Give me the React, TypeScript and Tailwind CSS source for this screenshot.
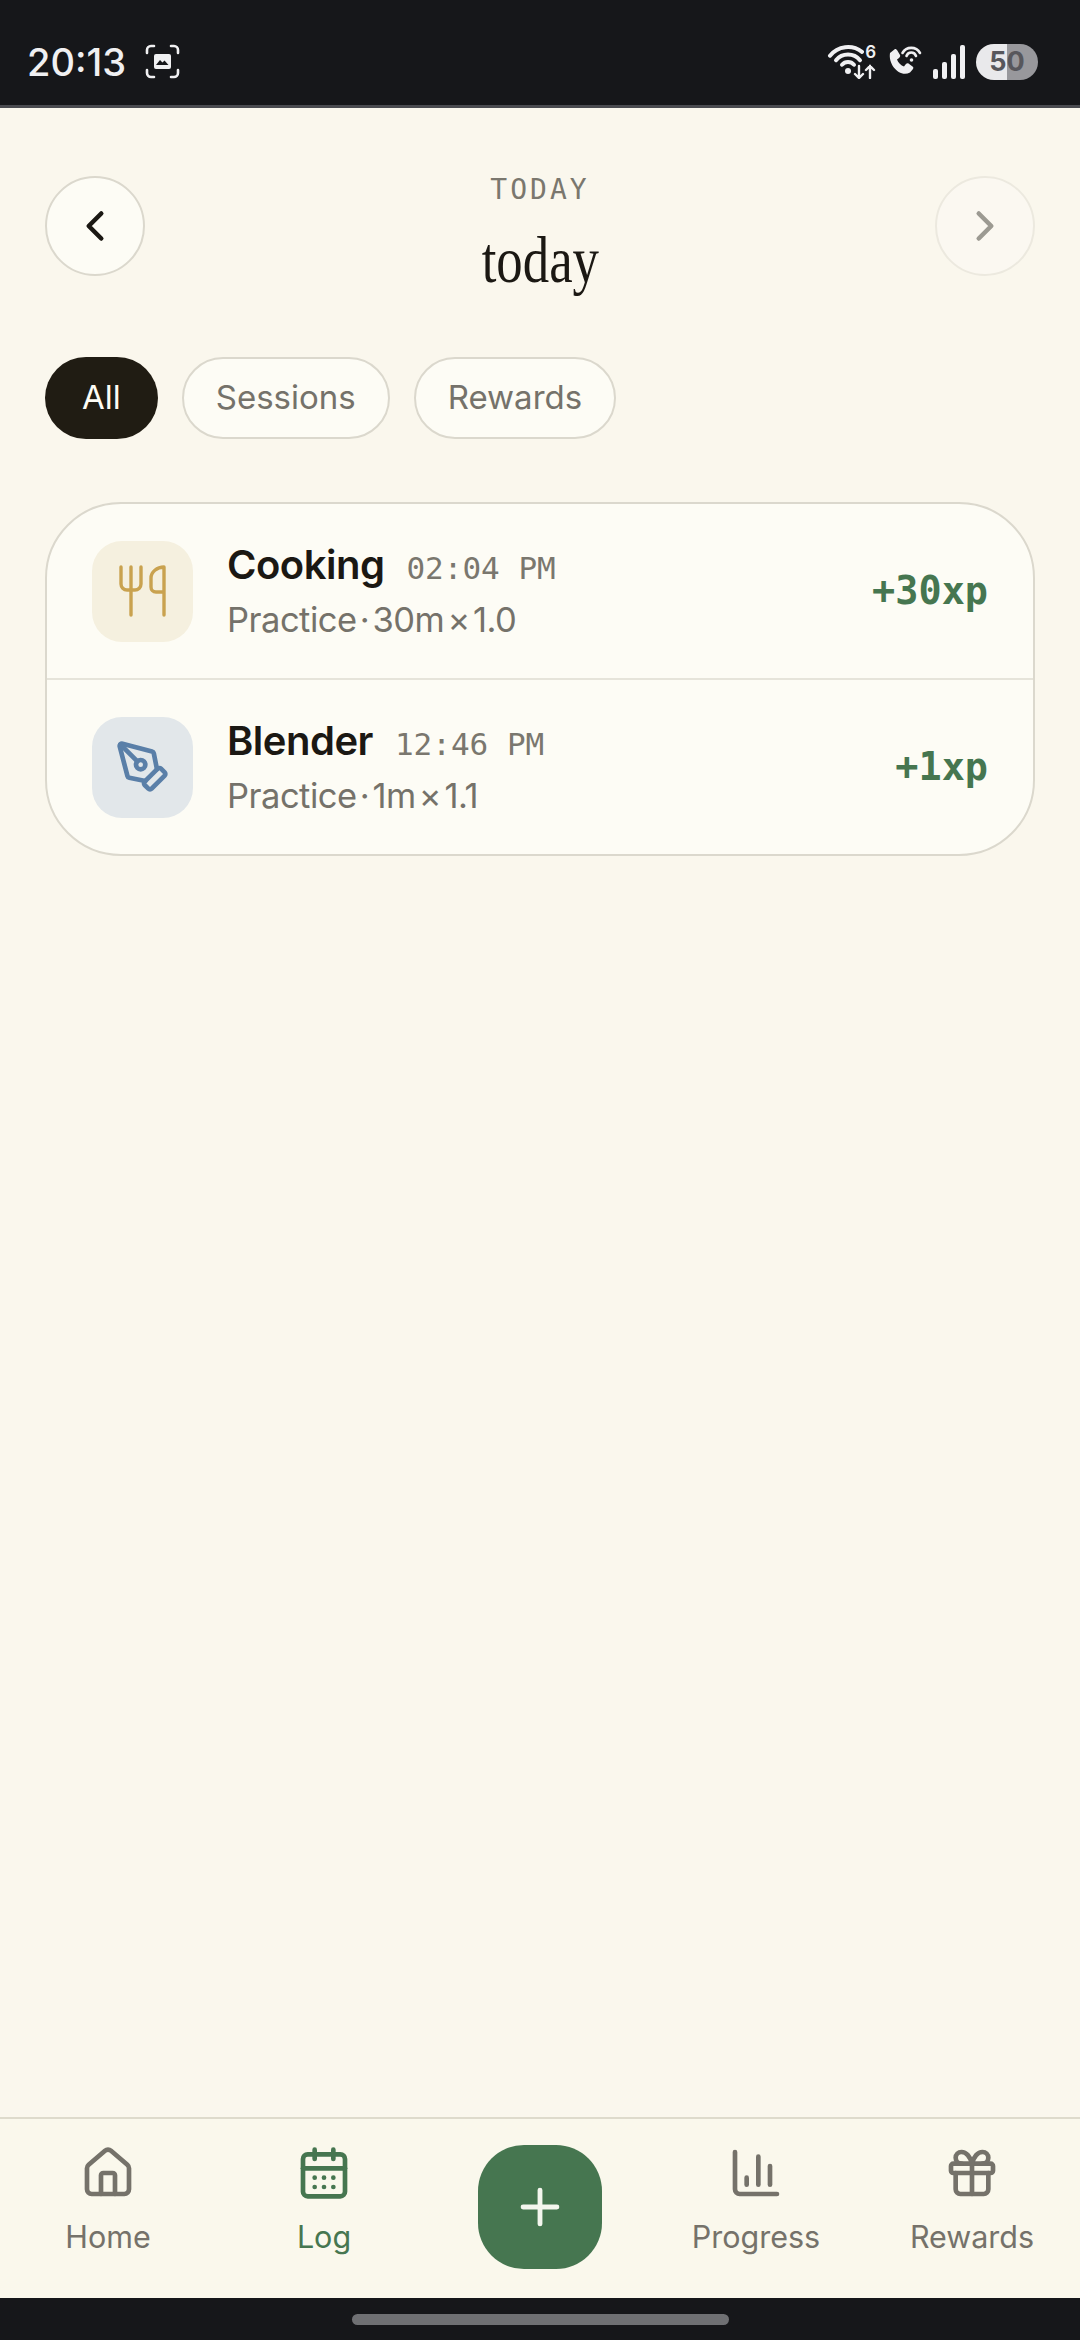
import { CalendarDays, ChartColumn, ChevronLeft, ChevronRight, Gift, House, PenTool, Plus } from "lucide-react";
import type { ReactNode } from "react";

const sans = "font-['Inter','Noto_Sans',sans-serif]";
const mono = "font-['DejaVu_Sans_Mono','Liberation_Mono',monospace]";

function ForkKnife() {
  return (
    <svg width="50" height="54" viewBox="0 0 50 54" fill="none" stroke="#c9a24f" strokeWidth="3.4" strokeLinecap="round" strokeLinejoin="round">
      <path d="M3 3v17a6 6 0 0 0 6 6h8a6 6 0 0 0 6-6V3" />
      <path d="M13 3v48" />
      <path d="M46 51V3c-7 0-13 5-13 11v9c0 3 2 5 5 5h8" />
    </svg>
  );
}

function StatusBar() {
  return (
    <div className="flex h-[108px] shrink-0 items-center justify-between border-b-[3px] border-[#4a4b50] bg-[#16171a] pl-[27px] pr-[42px] pt-[18px] text-[#f0f0f2]">
      <div className="flex items-center gap-[19px]">
        <span className={`${sans} text-[38px] font-medium leading-none`}>20:13</span>
        <svg width="35" height="35" viewBox="0 0 35 35" fill="none" stroke="currentColor" strokeWidth="2.6" strokeLinecap="round">
          <path d="M2 9V6a4 4 0 0 1 4-4h3M26 2h3a4 4 0 0 1 4 4v3M33 26v3a4 4 0 0 1-4 4h-3M9 33H6a4 4 0 0 1-4-4v-3" />
          <rect x="9" y="10" width="17" height="15" rx="2" fill="currentColor" stroke="none" />
          <path d="M11 21l4-5 2.500 2.500 2-2 4 4.500z" fill="#16171a" stroke="none" />
        </svg>
      </div>
      <div className="flex items-center gap-[11px]">
        <div className="relative h-[34px] w-[50px]">
          <svg width="50" height="34" viewBox="0 0 50 34" fill="none" stroke="currentColor" strokeLinecap="round">
            <path d="M3 10.700A23 23 0 0 1 35 6.800" strokeWidth="4" />
            <path d="M9 15.200A15.500 15.500 0 0 1 33 15.200" strokeWidth="4" />
            <path d="M15 19.700A8 8 0 0 1 27 19.700" strokeWidth="4" />
            <circle cx="21" cy="26" r="3" fill="currentColor" stroke="none" />
            <path d="M32 21v12m-4-4 4 4 4-4M43 33V21m-4 4 4-4 4 4" strokeWidth="2.400" />
          </svg>
          <span className={`${sans} absolute right-[1px] top-[-1px] text-[17px] font-semibold leading-[17px]`}>6</span>
        </div>
        <svg width="34" height="34" viewBox="0 0 34 34" fill="currentColor">
          <path d="M2 8l5-4c1 0 1.500.5 2 1l3 5c.5 1 0 2-1 3l-2 1.500c1 3 4 6 7 7l1.500-2c1-1 2-1.500 3-1l4 3c1 .5 1 1.500.5 2.500l-3 3.500C12 33 0 20 2 8z" />
          <path d="M14.500 8A10 10 0 0 1 32 8M18.500 11A5 5 0 0 1 28 11" fill="none" stroke="currentColor" strokeWidth="2.600" strokeLinecap="round" />
          <circle cx="23.500" cy="15" r="1.800" />
        </svg>
        <svg width="32" height="34" viewBox="0 0 32 34" fill="currentColor">
          <rect x="0" y="24" width="5" height="10" rx="2" />
          <rect x="9" y="17" width="5" height="17" rx="2" />
          <rect x="18" y="9" width="5" height="25" rx="2" />
          <rect x="27" y="0" width="5" height="34" rx="2" />
        </svg>
        <div className={`${sans} flex h-[36px] w-[62px] items-center justify-center rounded-full bg-[linear-gradient(90deg,#e9e9eb_50%,#98989c_50%)] text-[27px] font-bold leading-none text-[#57575c]`}>
          50
        </div>
      </div>
    </div>
  );
}

function Chip({ label, active }: { label: string; active?: boolean }) {
  return (
    <div
      className={
        active
          ? `${sans} flex h-[82px] items-center rounded-full bg-[#201c13] px-[37px] text-[33px] text-[#fdfcf5]`
          : `${sans} flex h-[82px] items-center rounded-full border-2 border-[#dbd8cd] bg-[#fdfcf5] px-[32px] text-[33px] text-[#75726a]`
      }
    >
      {label}
    </div>
  );
}

function LogRow({ icon, tint, title, time, detail, xp }: { icon: ReactNode; tint: string; title: string; time: string; detail: string; xp: string }) {
  return (
    <div className="flex h-[174px] items-center pl-[45px] pr-[45px]">
      <div className={`flex size-[101px] shrink-0 items-center justify-center rounded-[30px] ${tint}`}>{icon}</div>
      <div className="ml-[34px] flex-1">
        <div className="flex items-baseline gap-[22px]">
          <span className={`${sans} text-[40px] font-semibold leading-[48px] tracking-[-0.5px] text-[#1b1813]`}>{title}</span>
          <span className={`${mono} text-[31px] text-[#7a776e]`}>{time}</span>
        </div>
        <div className={`${sans} mt-[7px] text-[34.500px] leading-[42px] tracking-[-0.5px] text-[#75726a] [word-spacing:-6px]`}>{detail}</div>
      </div>
      <span className={`${mono} text-[38.500px] font-semibold text-[#467650]`}>{xp}</span>
    </div>
  );
}

function NavItem({ icon, label, active }: { icon: ReactNode; label: string; active?: boolean }) {
  return (
    <div className={`flex flex-col items-center ${active ? "text-[#467650]" : "text-[#75726a]"}`}>
      {icon}
      <span className={`${sans} mt-[17px] text-[30.500px] leading-[38px]`}>{label}</span>
    </div>
  );
}

export default function App() {
  return (
    <div className="flex h-[2340px] w-[1080px] flex-col overflow-hidden bg-[#faf7ed]">
      <StatusBar />

      <main className="flex-1 px-[45px]">
        {/* Header */}
        <div className="mt-[68px] flex items-start justify-between">
          <button className="flex size-[100px] items-center justify-center rounded-full border-2 border-[#dbd8cd] bg-[#fdfcf5]">
            <ChevronLeft size={50} strokeWidth={2.2} color="#1b1813" />
          </button>
          <div className="-mt-[4px] flex flex-col items-center">
            <span className={`${mono} text-[28px] leading-[36px] tracking-[3px] text-[#7a776e]`}>TODAY</span>
            <span className="mt-[14px] inline-block scale-x-[0.8] font-['Liberation_Serif',serif] text-[66px] leading-[76px] text-[#1b1813]">today</span>
          </div>
          <button className="flex size-[100px] items-center justify-center rounded-full border-2 border-[#ece9df] bg-[#fbf8f1]">
            <ChevronRight size={50} strokeWidth={2.2} color="#9c9a92" />
          </button>
        </div>

        {/* Filters */}
        <div className="mt-[59px] flex gap-[24px]">
          <Chip label="All" active />
          <Chip label="Sessions" />
          <Chip label="Rewards" />
        </div>

        {/* Entries */}
        <div className="mt-[63px] overflow-hidden rounded-[76px] border-2 border-[#dbd8cd] bg-[#fdfcf5]">
          <LogRow icon={<ForkKnife />} tint="bg-[#f5f0df]" title="Cooking" time="02:04 PM" detail="Practice · 30m × 1.0" xp="+30xp" />
          <div className="h-[2px] bg-[#e6e4da]" />
          <LogRow icon={<PenTool size={56} strokeWidth={2} color="#5a7fa8" />} tint="bg-[#e2e7ea]" title="Blender" time="12:46 PM" detail="Practice · 1m × 1.1" xp="+1xp" />
        </div>
      </main>

      {/* Bottom nav */}
      <nav className="grid h-[181px] shrink-0 grid-cols-5 items-start border-t-2 border-[#dedbcc] bg-[#faf8ec] pt-[26px]">
        <NavItem icon={<House size={56} strokeWidth={2} />} label="Home" />
        <NavItem icon={<CalendarDays size={56} strokeWidth={2} />} label="Log" active />
        <div className="flex justify-center">
          <div className="flex size-[124px] items-center justify-center rounded-[46px] bg-[#467650]">
            <Plus size={58} strokeWidth={2} color="#f4f6ee" />
          </div>
        </div>
        <NavItem icon={<ChartColumn size={56} strokeWidth={2} />} label="Progress" />
        <NavItem icon={<Gift size={56} strokeWidth={2} />} label="Rewards" />
      </nav>

      <div className="flex h-[42px] shrink-0 items-center justify-center bg-[#16171a]">
        <div className="h-[11px] w-[377px] rounded-full bg-[#6f7073]" />
      </div>
    </div>
  );
}
